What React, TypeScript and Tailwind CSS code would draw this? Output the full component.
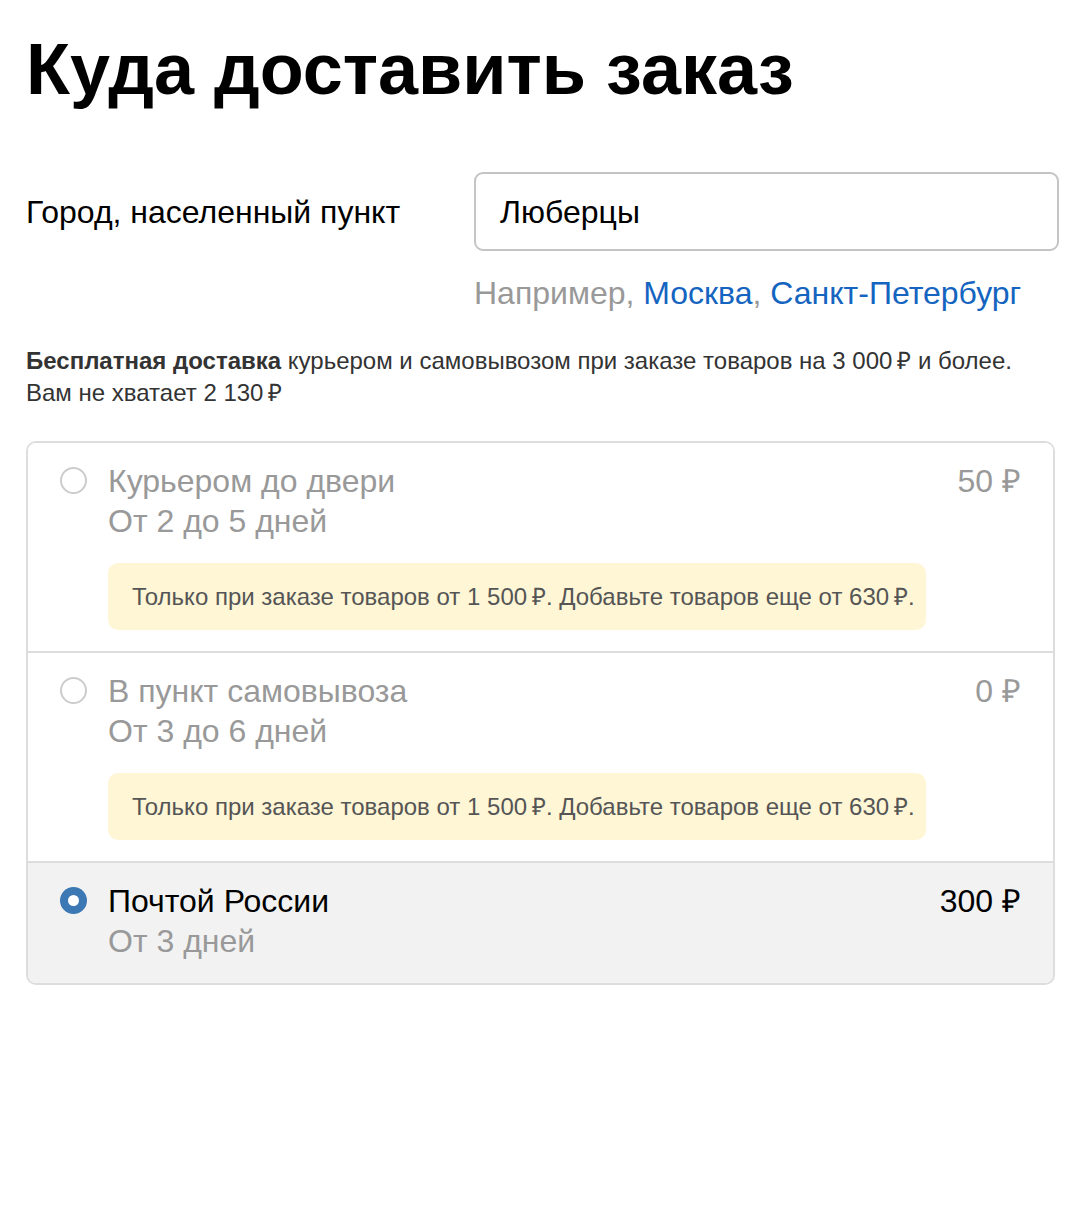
import React from "react";

function Radio({ checked }: { checked?: boolean }) {
  if (checked) {
    return (
      <span className="mt-[6px] flex h-[27px] w-[27px] shrink-0 items-center justify-center rounded-full bg-[#3b78b4]">
        <span className="h-[11px] w-[11px] rounded-full bg-white" />
      </span>
    );
  }
  return <span className="mt-[6px] block h-[27px] w-[27px] shrink-0 rounded-full border-2 border-[#cccccc] bg-white" />;
}

function Note() {
  return (
    <div className="mt-[22px] w-[818px] whitespace-nowrap rounded-[10px] bg-[#fff6d6] px-6 py-[16px] text-[24px] leading-[35px] text-[#555]">
      Только при заказе товаров от 1&nbsp;500&#8239;₽. Добавьте товаров еще от 630&#8239;₽.
    </div>
  );
}

function Option({
  title,
  sub,
  price,
  checked,
  note,
  last,
}: {
  title: string;
  sub: string;
  price: string;
  checked?: boolean;
  note?: boolean;
  last?: boolean;
}) {
  return (
    <div
      className={
        (checked ? "bg-[#f2f2f2] " : "bg-white ") +
        (last ? "" : "border-b-2 border-[#dddddd] ") +
        "flex gap-[21px] pl-[32px] pr-[32px] pt-[18px] " +
        (note ? "pb-[21px]" : "pb-[22px]")
      }
    >
      <Radio checked={checked} />
      <div className="flex-1">
        <div className="flex items-start justify-between">
          <div>
            <div className={(checked ? "text-black " : "text-[#999] ") + "text-[32px] leading-[40px]"}>{title}</div>
            <div className="text-[32px] leading-[40px] text-[#999]">{sub}</div>
          </div>
          <div className={(checked ? "text-black " : "text-[#999] ") + "text-[32px] leading-[40px]"}>{price}</div>
        </div>
        {note && <Note />}
      </div>
    </div>
  );
}

export default function App() {
  return (
    <div className="min-h-[1230px] bg-white px-[26px] pt-[24px] text-black" style={{ fontFamily: '"Liberation Sans", Arial, sans-serif' }}>
      <h1 className="text-[72px] font-bold leading-[90px]">Куда доставить заказ</h1>
      <div className="mt-[58px] flex items-start">
        <div className="w-[448px] shrink-0 pt-[20px] text-[32px] leading-[40px]">Город, населенный пункт</div>
        <div className="shrink-0">
          <div className="flex h-[79px] w-[585px] items-center rounded-[9px] border-2 border-[#c4c4c4] px-[24px] text-[32px]">
            Люберцы
          </div>
          <div className="mt-[22px] text-[32px] leading-[40px] text-[#999]">
            Например, <span className="text-[#1565c0]">Москва</span>, <span className="text-[#1565c0]">Санкт-Петербург</span>
          </div>
        </div>
      </div>
      <div className="mt-[32px] text-[24px] leading-[32px] text-[#333]">
        <b>Бесплатная доставка</b> курьером и самовывозом при заказе товаров на 3&nbsp;000&#8239;₽ и более.
        <br />
        Вам не хватает 2&nbsp;130&#8239;₽
      </div>
      <div className="mt-[32px] w-[1029px] overflow-hidden rounded-[10px] border-2 border-[#dddddd]">
        <Option title="Курьером до двери" sub="От 2 до 5 дней" price="50 ₽" note />
        <Option title="В пункт самовывоза" sub="От 3 до 6 дней" price="0 ₽" note />
        <Option title="Почтой России" sub="От 3 дней" price="300 ₽" checked last />
      </div>
    </div>
  );
}
